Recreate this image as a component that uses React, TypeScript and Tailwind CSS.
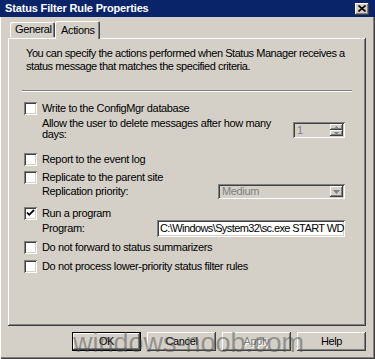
import React from "react";

const raised =
  "shadow-[inset_-1px_-1px_#404040,inset_1px_1px_#ffffff,inset_-2px_-2px_#808080,inset_2px_2px_#d4d0c8]";
const sunken =
  "shadow-[inset_1px_1px_#808080,inset_-1px_-1px_#ffffff,inset_2px_2px_#404040,inset_-2px_-2px_#d4d0c8]";

function Check({ checked }: { checked?: boolean }) {
  return (
    <div className={`w-[13px] h-[13px] shrink-0 bg-white ${sunken} flex items-center justify-center`}>
      {checked && (
        <svg width="13" height="13" viewBox="0 0 13 13">
          <path d="M3 5.5 L5.2 7.8 L10 3" fill="none" stroke="#000" strokeWidth="1.8" />
        </svg>
      )}
    </div>
  );
}

function CheckRow({ label, checked, mt }: { label: string; checked?: boolean; mt: string }) {
  return (
    <div className={`flex items-center h-[14px] gap-[5px] ${mt}`}>
      <Check checked={checked} />
      <span className="whitespace-nowrap">{label}</span>
    </div>
  );
}

export default function App() {
  return (
    <div
      className="relative w-[375px] h-[359px] bg-[#d4d0c8] overflow-hidden text-black text-[11px] leading-[13px] tracking-[-0.35px] shadow-[inset_1px_0_#ffffff,inset_-1px_-1px_#404040,inset_-2px_-2px_#808080]"
      style={{ fontFamily: '"Liberation Sans", Arial, sans-serif' }}
    >
      {/* Title bar */}
      <div className="h-[17px] bg-[#0a246a] flex items-center justify-between pl-[5px] pr-[6px]">
        <span className="text-white font-bold text-[11px] leading-[13px] tracking-[-0.15px]">
          Status Filter Rule Properties
        </span>
        <div className={`w-[14px] h-[12px] bg-[#d4d0c8] ${raised} flex items-center justify-center`}>
          <svg width="8" height="7" viewBox="0 0 8 7">
            <path d="M0.5 0.5 L7.5 6.5 M7.5 0.5 L0.5 6.5" stroke="#000" strokeWidth="1.6" />
          </svg>
        </div>
      </div>

      <div className="px-[8px]">
        {/* Tabs */}
        <div className="flex items-end h-[17px] mt-[4px] pl-[2px] relative z-10">
          <div className="w-[45px] h-[15px] rounded-t-[2px] shadow-[inset_1px_1px_#ffffff,inset_-1px_0_#404040,inset_-2px_0_#808080] flex items-center pl-[5px] mb-[1px]">
            General
          </div>
          <div className="w-[45px] h-[18px] -mb-[1px] bg-[#d4d0c8] rounded-t-[2px] shadow-[inset_1px_1px_#ffffff,inset_-1px_0_#404040,inset_-2px_0_#808080] flex items-center pl-[6px]">
            Actions
          </div>
        </div>

        {/* Panel */}
        <div className={`w-[358px] h-[288px] ${raised} px-[16px] pt-[9px]`}>
          <div className="pl-[2px] whitespace-nowrap tracking-[-0.45px]">
            You can specify the actions performed when Status Manager receives a
            <br />
            status message that matches the specified criteria.
          </div>

          <div className="mx-[-2px] mt-[17px] h-[2px] border-t border-[#808080] border-b border-b-white" />

          <CheckRow label="Write to the ConfigMgr database" mt="mt-[9px]" />

          <div className="flex items-start justify-between mt-[3px] pl-[18px] pr-[5px]">
            <div className="leading-[11px] whitespace-nowrap">
              Allow the user to delete messages after how many
              <br />
              days:
            </div>
            <div className={`mt-[4px] w-[52px] h-[16px] ${sunken} flex items-stretch p-[2px]`}>
              <div className="flex-1 pl-[2px] text-[#808080] leading-[12px]">1</div>
              <div className="w-[13px] flex flex-col">
                <div className={`flex-1 ${raised} flex items-center justify-center`}>
                  <svg width="5" height="3" viewBox="0 0 5 3">
                    <path d="M0 3 L2.5 0 L5 3 Z" fill="#808080" />
                  </svg>
                </div>
                <div className={`flex-1 ${raised} flex items-center justify-center`}>
                  <svg width="5" height="3" viewBox="0 0 5 3">
                    <path d="M0 0 L2.5 3 L5 0 Z" fill="#808080" />
                  </svg>
                </div>
              </div>
            </div>
          </div>

          <CheckRow label="Report to the event log" mt="mt-[12px]" />
          <CheckRow label="Replicate to the parent site" mt="mt-[4px]" />

          <div className="flex items-center justify-between h-[15px] pl-[18px] pr-[5px]">
            <span className="whitespace-nowrap">Replication priority:</span>
            <div className={`w-[127px] h-[15px] ${sunken} flex items-stretch p-[2px]`}>
              <div className="flex-1 pl-[2px] text-[#808080] leading-[11px]">Medium</div>
              <div className={`w-[13px] ${raised} flex items-center justify-center`}>
                <svg width="7" height="4" viewBox="0 0 7 4">
                  <path d="M0 0 L3.5 4 L7 0 Z" fill="#808080" />
                </svg>
              </div>
            </div>
          </div>

          <CheckRow label="Run a program" checked mt="mt-[7px]" />

          <div className="flex items-center justify-between h-[17px] pl-[18px] pr-[5px]">
            <span className="whitespace-nowrap">Program:</span>
            <div className={`w-[188px] h-[17px] bg-white ${sunken} flex items-center pl-[3px] overflow-hidden whitespace-nowrap tracking-[-0.6px]`}>
              C:\Windows\System32\sc.exe START WD
            </div>
          </div>

          <CheckRow label="Do not forward to status summarizers" mt="mt-[3px]" />
          <CheckRow label="Do not process lower-priority status filter rules" mt="mt-[5px]" />
        </div>
      </div>

      {/* Buttons */}
      <div className="flex justify-end gap-[6px] pr-[9px] mt-[6px]">
        <div className="w-[69px] h-[19px] border border-black flex">
          <div className={`flex-1 ${raised} flex items-center justify-center`}>OK</div>
        </div>
        <div className={`w-[69px] h-[19px] ${raised} flex items-center justify-center`}>Cancel</div>
        <div
          className={`w-[69px] h-[19px] ${raised} flex items-center justify-center text-[#808080] [text-shadow:1px_1px_#ffffff]`}
        >
          Apply
        </div>
        <div className={`w-[69px] h-[19px] ${raised} flex items-center justify-center`}>Help</div>
      </div>

      {/* Watermark */}
      <div
        className="absolute left-[73px] top-[330px] text-[27px] leading-[27px] tracking-normal text-[rgba(80,80,80,0.5)] whitespace-nowrap pointer-events-none"
        style={{ fontFamily: '"Liberation Sans", Arial, sans-serif' }}
      >
        windows-noob.com
      </div>
    </div>
  );
}
